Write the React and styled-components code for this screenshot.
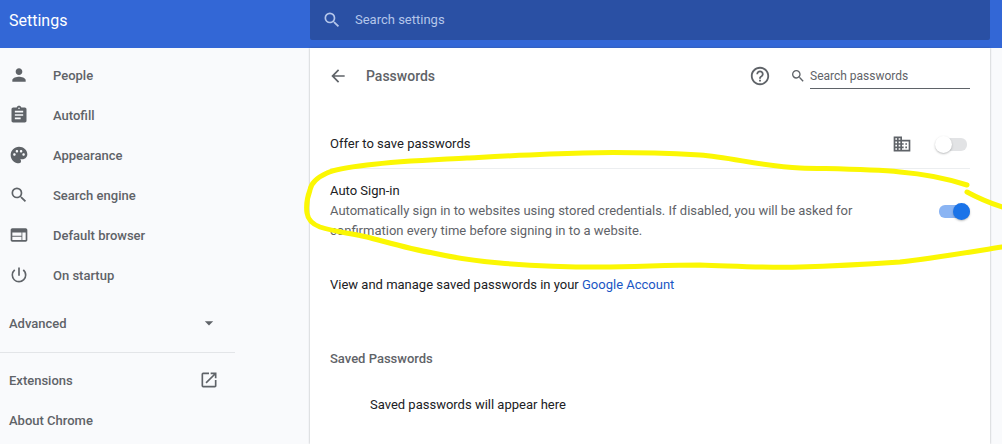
import React from 'react';
import styled, { createGlobalStyle } from 'styled-components';
import {
  MdPerson,
  MdAssignment,
  MdPalette,
  MdSearch,
  MdWeb,
  MdPowerSettingsNew,
  MdArrowDropDown,
  MdOpenInNew,
  MdArrowBack,
  MdHelpOutline,
  MdDomain,
} from 'react-icons/md';

const navItems = [
  { label: 'People', Icon: MdPerson },
  { label: 'Autofill', Icon: MdAssignment },
  { label: 'Appearance', Icon: MdPalette },
  { label: 'Search engine', Icon: MdSearch },
  { label: 'Default browser', Icon: MdWeb },
  { label: 'On startup', Icon: MdPowerSettingsNew },
];

export default function App() {
  return (
    <Page>
      <GlobalStyle />
      <Header>
        <Title>Settings</Title>
        <SearchBar>
          <MdSearch size={20} />
          <SearchText>Search settings</SearchText>
        </SearchBar>
      </Header>
      <Body>
        <Sidebar>
          <Nav>
            {navItems.map(({ label, Icon }) => (
              <NavItem key={label}>
                <NavIcon><Icon size={20} /></NavIcon>
                {label}
              </NavItem>
            ))}
          </Nav>
          <SideRow $top={8}>
            Advanced
            <MdArrowDropDown size={20} />
          </SideRow>
          <SideDivider />
          <SideRow>
            Extensions
            <MdOpenInNew size={20} />
          </SideRow>
          <SideRow>About Chrome</SideRow>
        </Sidebar>
        <Main>
          <SubHeader>
            <BackIcon><MdArrowBack size={20} /></BackIcon>
            <PageTitle>Passwords</PageTitle>
            <HelpIcon><MdHelpOutline size={22} /></HelpIcon>
            <PasswordSearch>
              <MdSearch size={16} />
              <PasswordInput>Search passwords</PasswordInput>
            </PasswordSearch>
          </SubHeader>
          <OfferRow>
            <Label>Offer to save passwords</Label>
            <MdDomain size={20} />
            <Toggle />
          </OfferRow>
          <AutoRow>
            <div>
              <Label>Auto Sign-in</Label>
              <Secondary>
                Automatically sign in to websites using stored credentials. If disabled, you will be asked for
                confirmation every time before signing in to a website.
              </Secondary>
            </div>
            <Toggle $on />
          </AutoRow>
          <ManageRow>
            View and manage saved passwords in your <GoogleLink>Google Account</GoogleLink>
          </ManageRow>
          <SectionTitle>Saved Passwords</SectionTitle>
          <EmptyText>Saved passwords will appear here</EmptyText>
        </Main>
      </Body>
      <Scribble viewBox="0 0 1002 444">
        <path d="M967 185C945 178 925 174 900 172C870 169 835 169 800 168C765 167 730 157 700 155C660 153 620 152 583 153C540 154 505 156 467 158C430 160 400 161 367 165C350 167 335 169 327 173C316 178 311 183 310 190C307 198 306 206 307 213C308 220 312 224 320 227C335 232 350 233 367 237C390 243 410 249 433 253C455 258 478 261 500 263C535 266 565 267 600 267C635 267 665 265 700 265C735 266 765 268 800 267C835 266 870 264 900 262C935 258 970 252 1002 247" />
        <path d="M967 192C978 198 990 203 1002 207" />
      </Scribble>
    </Page>
  );
}

const GlobalStyle = createGlobalStyle`
  html, body {
    margin: 0;
    background: #f9fafc;
    overflow: hidden;
  }
`;

const Page = styled.div`
  color: #5f6368;
  font-family: Roboto, "Liberation Sans", sans-serif;
  font-size: 13px;
  height: 444px;
  overflow: hidden;
  position: relative;
  width: 1002px;
`;

const Header = styled.header`
  background: #3367d6;
  display: flex;
  height: 48px;
`;

const Title = styled.h1`
  color: #fff;
  font-size: 16px;
  font-weight: 400;
  line-height: 41px;
  margin: 0;
  padding-left: 9px;
  width: 301px;
`;

const SearchBar = styled.div`
  align-items: center;
  background: #2a50a4;
  border-radius: 0 0 2px 2px;
  box-sizing: border-box;
  color: #b4c6ea;
  display: flex;
  gap: 13px;
  height: 40px;
  padding: 0 0 1px 12px;
  width: 680px;
`;

const SearchText = styled.span`
  font-size: 13px;
`;

const Body = styled.div`
  display: flex;
  height: 396px;
`;

const Sidebar = styled.nav`
  flex: none;
  font-weight: 500;
  padding-top: 7px;
  width: 309px;
`;

const Nav = styled.div`
  display: flex;
  flex-direction: column;
`;

const NavItem = styled.div`
  align-items: center;
  display: flex;
  height: 40px;
`;

const NavIcon = styled.span`
  display: flex;
  justify-content: center;
  margin-right: 24px;
  padding-left: 9px;
  width: 20px;
`;

const SideRow = styled.div`
  align-items: center;
  display: flex;
  height: 40px;
  justify-content: space-between;
  margin-top: ${props => props.$top || 0}px;
  padding-left: 9px;
  width: 210px;
`;

const SideDivider = styled.div`
  background: #e3e5e8;
  height: 1px;
  margin: 9px 0 7px;
  width: 235px;
`;

const Main = styled.main`
  background: #fff;
  box-shadow: 0 0 2px rgba(60, 64, 67, 0.4);
  margin-left: 1px;
  padding: 8px 20px 0;
  width: 640px;
`;

const SubHeader = styled.div`
  align-items: center;
  display: flex;
  height: 40px;
`;

const BackIcon = styled.span`
  display: flex;
  margin: 0 18px 0 -2px;
`;

const PageTitle = styled.h2`
  flex: 1;
  font-size: 14px;
  font-weight: 500;
  margin: 0;
`;

const HelpIcon = styled.span`
  display: flex;
  margin-right: 19px;
`;

const PasswordSearch = styled.div`
  align-items: center;
  display: flex;
  gap: 4px;
  width: 180px;
`;

const PasswordInput = styled.div`
  border-bottom: 1px solid #5f6368;
  flex: 1;
  font-size: 12px;
  line-height: 24px;
`;

const OfferRow = styled.div`
  align-items: center;
  border-bottom: 1px solid #eceef0;
  display: flex;
  gap: 24px;
  height: 48px;
  margin-top: 24px;
`;

const Label = styled.div`
  color: #202124;
  flex: 1;
  font-size: 13px;
  line-height: 20px;
`;

const AutoRow = styled.div`
  align-items: center;
  display: flex;
  justify-content: space-between;
  padding-top: 12px;
`;

const Secondary = styled.div`
  font-size: 13px;
  line-height: 20px;
  width: 540px;
`;

const Toggle = styled.span`
  background: ${props => (props.$on ? '#8ab4f3' : '#e2e3e5')};
  border-radius: 6px;
  flex: none;
  height: 13px;
  margin-right: ${props => (props.$on ? 0 : 3)}px;
  position: relative;
  width: 31px;

  &::after {
    background: ${props => (props.$on ? '#1a73e8' : '#fff')};
    border-radius: 50%;
    box-shadow: 0 1px 2px rgba(60, 64, 67, 0.35);
    content: '';
    height: 17px;
    left: ${props => (props.$on ? 14 : -1)}px;
    position: absolute;
    top: -2px;
    width: 17px;
  }
`;

const ManageRow = styled.div`
  color: #202124;
  line-height: 20px;
  margin-top: 34px;
`;

const GoogleLink = styled.span`
  color: #1a56c4;
`;

const SectionTitle = styled.h3`
  font-size: 13px;
  font-weight: 500;
  line-height: 20px;
  margin: 54px 0 0;
`;

const EmptyText = styled.div`
  color: #202124;
  line-height: 20px;
  margin-top: 26px;
  padding-left: 40px;
`;

const Scribble = styled.svg`
  fill: none;
  height: 444px;
  left: 0;
  pointer-events: none;
  position: absolute;
  stroke: #fbf703;
  stroke-linecap: round;
  stroke-linejoin: round;
  stroke-width: 5;
  top: 0;
  width: 1002px;
`;
